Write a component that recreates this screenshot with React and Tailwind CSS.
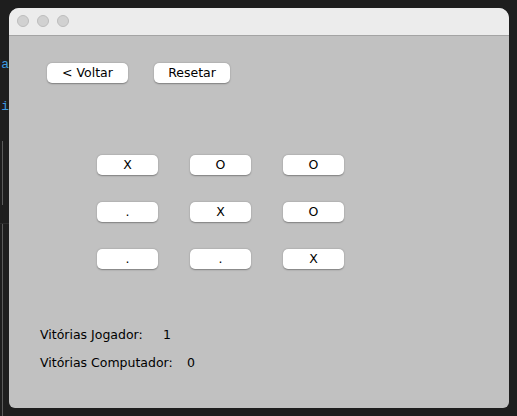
import React from 'react';

const board = [
  ['X', 'O', 'O'],
  ['.', 'X', 'O'],
  ['.', '.', 'X'],
];

function MacButton({ children, className = '' }) {
  return (
    <button
      className={
        'h-[20px] rounded-[5px] bg-white text-[12.5px] leading-none text-black shadow-[0_0.5px_1.5px_rgba(0,0,0,0.35)] flex items-center justify-center ' +
        className
      }
    >
      {children}
    </button>
  );
}

export default function App() {
  return (
    <div
      className="w-[517px] h-[416px] bg-[#1e1e1e] flex overflow-hidden"
      style={{ fontFamily: '"DejaVu Sans", "Liberation Sans", sans-serif' }}
    >
      {/* editor behind the window */}
      <div className="w-[9px] shrink-0 flex flex-col pt-[57px] overflow-hidden">
        <div className="h-[16px] flex justify-end whitespace-nowrap text-[13px] leading-[16px] text-[#3d9be0] font-['Liberation_Mono',monospace]">
          Ja
        </div>
        <div className="mt-[26px] h-[16px] flex justify-end whitespace-nowrap text-[13px] leading-[16px] text-[#3d9be0] font-['Liberation_Mono',monospace]">
          .i
        </div>
        <div className="mt-[26px] ml-[2px] w-px h-[64px] bg-[#5c5c5c]" />
        <div className="mt-[18px] border-t border-[#2c2c2c] flex-1">
          <div className="ml-[2px] w-px h-full bg-[#5c5c5c]" />
        </div>
      </div>

      {/* window */}
      <div className="mt-[8px] w-[500px] h-[400px] rounded-t-[10px] rounded-b-[6px] overflow-hidden flex flex-col bg-[#c1c1c1]">
        <div className="h-[28px] shrink-0 bg-[#ececec] border-b border-[#a4a4a4] flex items-center gap-[8px] pl-[8px] pb-[1px]">
          <span className="w-[12px] h-[12px] rounded-full bg-[#d1d1d1] border border-[#bcbcbc]" />
          <span className="w-[12px] h-[12px] rounded-full bg-[#d1d1d1] border border-[#bcbcbc]" />
          <span className="w-[12px] h-[12px] rounded-full bg-[#d1d1d1] border border-[#bcbcbc]" />
        </div>

        <div className="flex-1 flex flex-col pl-[38px] pt-[27px]">
          <div className="flex gap-[26px]">
            <MacButton className="w-[81px]">&lt; Voltar</MacButton>
            <MacButton className="w-[76px]">Resetar</MacButton>
          </div>

          <div className="mt-[72px] ml-[50px] grid grid-cols-[61px_61px_61px] gap-x-[32px] gap-y-[27px] w-fit">
            {board.flat().map((c, i) => (
              <MacButton key={i} className="w-[61px]">
                {c}
              </MacButton>
            ))}
          </div>

          <div className="mt-[58px] -ml-[7px] flex flex-col gap-[12px] text-[12.5px] leading-[16px] text-black">
            <div className="flex">
              <span className="w-[123px] shrink-0">Vitórias Jogador:</span>
              <span>1</span>
            </div>
            <div className="flex">
              <span className="w-[147px] shrink-0">Vitórias Computador:</span>
              <span>0</span>
            </div>
          </div>
        </div>
      </div>
    </div>
  );
}
